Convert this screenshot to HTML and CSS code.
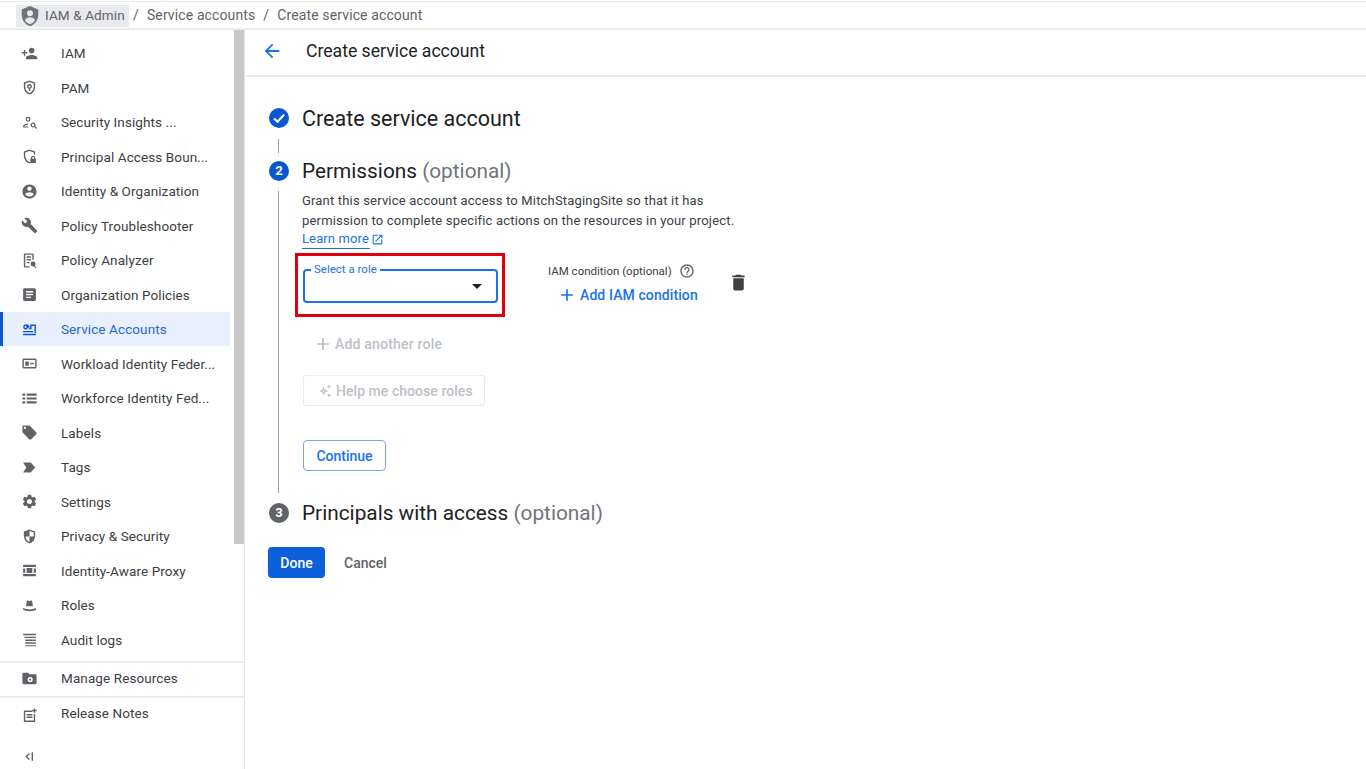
FILE: index.html
```html
<!DOCTYPE html>
<html lang="en">
<head>
    <meta charset="UTF-8">
    <meta name="viewport" content="width=device-width, initial-scale=1.0">
    <title>Create service account</title>
    <link rel="stylesheet" href="styles.css">
</head>
<body>
    <header class="crumbs">
        <span class="crumb-chip">
            <svg class="crumb-icon" viewBox="0 0 24 24"><path d="M12 1L3 5v6c0 5.55 3.84 10.74 9 12 5.16-1.26 9-6.45 9-12V5l-9-4z"/><circle cx="12" cy="9" r="3.2" fill="#e8eaed"/><path d="M6.5 17c.3-2.4 3.3-3.6 5.5-3.6s5.200 1.200 5.500 3.600c-1.300 1.900-3.300 3.400-5.500 4-2.200-.6-4.200-2.100-5.500-4z" fill="#e8eaed"/></svg>
            IAM &amp; Admin
        </span>
        <span class="crumb-sep">/</span>
        <span>Service accounts</span>
        <span class="crumb-sep">/</span>
        <span>Create service account</span>
    </header>

    <div class="shell">
        <nav class="sidebar">
            <div class="nav-scroll">
                <ul class="nav-list">
                    <li class="nav-item"><svg class="nav-icon" viewBox="0 0 24 24"><path d="M15 12c2.21 0 4-1.790 4-4s-1.790-4-4-4-4 1.790-4 4 1.790 4 4 4zm-9-2V7H4v3H1v2h3v3h2v-3h3v-2H6zm9 4c-2.670 0-8 1.340-8 4v2h16v-2c0-2.660-5.330-4-8-4z"/></svg>IAM</li>
                    <li class="nav-item"><svg class="nav-icon" viewBox="0 0 24 24"><path d="M12 2L4 5v6c0 5 3.400 9.700 8 11 4.600-1.300 8-6 8-11V5l-8-3zm6 9c0 4-2.500 7.600-6 8.900-3.500-1.300-6-4.900-6-8.900V6.400l6-2.200 6 2.200V11z"/><path d="M12 7a3.500 3.500 0 0 0-1 6.850V17h2v-3.150A3.500 3.500 0 0 0 12 7zm0 5a1.500 1.500 0 1 1 0-3 1.500 1.500 0 0 1 0 3z"/></svg>PAM</li>
                    <li class="nav-item"><svg class="nav-icon" viewBox="0 0 24 24"><path d="M10 4a3.500 3.500 0 1 0 0 7 3.500 3.500 0 0 0 0-7zm0 5.200a1.700 1.700 0 1 1 0-3.400 1.700 1.700 0 0 1 0 3.400zM3 19v-1.500c0-2.500 4-4 7-4v1.800c-2.600 0-5.200 1.200-5.200 2.200h5.700V19H3z"/><path d="M17 12a3.500 3.500 0 1 0 1.900 6.440L21.500 21l1.300-1.300-2.570-2.570A3.500 3.500 0 0 0 17 12zm0 5.200a1.700 1.700 0 1 1 0-3.400 1.700 1.700 0 0 1 0 3.400z"/></svg>Security Insights ...</li>
                    <li class="nav-item"><svg class="nav-icon" viewBox="0 0 24 24"><path d="M12 2L4 5v6c0 5 3.400 9.700 8 11l1-.3v-2.100l-1 .3c-3.500-1.300-6-4.900-6-8.900V6.400l6-2.200 6 2.200V9h2V5l-8-3z"/><path d="M17 11a3 3 0 0 0-3 3v1h-1v6h8v-6h-1v-1a3 3 0 0 0-3-3zm-1.300 4v-1a1.300 1.300 0 0 1 2.600 0v1h-2.600z"/></svg>Principal Access Boun...</li>
                    <li class="nav-item"><svg class="nav-icon" viewBox="0 0 24 24"><path d="M12 2C6.480 2 2 6.480 2 12s4.480 10 10 10 10-4.480 10-10S17.520 2 12 2zm0 3c1.660 0 3 1.340 3 3s-1.340 3-3 3-3-1.340-3-3 1.340-3 3-3zm0 14.200c-2.500 0-4.710-1.280-6-3.220.030-1.990 4-3.080 6-3.080 1.990 0 5.970 1.090 6 3.080-1.290 1.940-3.500 3.220-6 3.220z"/></svg>Identity &amp; Organization</li>
                    <li class="nav-item"><svg class="nav-icon" viewBox="0 0 24 24"><path d="M22.700 19l-9.100-9.100c.9-2.300.4-5-1.500-6.900-2-2-5-2.400-7.400-1.300L9 6 6 9 1.600 4.700C.4 7.100.9 10.100 2.900 12.100c1.900 1.900 4.600 2.400 6.900 1.500l9.100 9.100c.4.4 1 .4 1.400 0l2.300-2.300c.5-.4.5-1.100.1-1.400z"/></svg>Policy Troubleshooter</li>
                    <li class="nav-item"><svg class="nav-icon" viewBox="0 0 24 24"><path d="M6 2h10a2 2 0 0 1 2 2v7h-2V4H6v16h6v2H6a2 2 0 0 1-2-2V4a2 2 0 0 1 2-2zm2 4h6v2H8V6zm0 4h6v2H8v-2zm0 4h4v2H8v-2z"/><circle cx="17" cy="17" r="3.500"/><path d="M19 19l3 3-1 1-3-3z"/></svg>Policy Analyzer</li>
                    <li class="nav-item"><svg class="nav-icon" viewBox="0 0 24 24"><path d="M19 3H5c-1.100 0-2 .9-2 2v14c0 1.100.9 2 2 2h14c1.100 0 2-.9 2-2V5c0-1.100-.9-2-2-2zm-5 14H7v-2h7v2zm3-4H7v-2h10v2zm0-4H7V7h10v2z"/></svg>Organization Policies</li>
                    <li class="nav-item is-active"><svg class="nav-icon" viewBox="0 0 24 24"><path d="M6.500 5a3.500 3.500 0 1 0 3.300 4.700H13V5h8v12h-2V7h-4v4.700H9.800A3.500 3.500 0 0 0 6.500 5zm0 5a1.500 1.500 0 1 1 0-3 1.500 1.500 0 0 1 0 3zM3 14h14v2H3v-2zm0 4h18v2H3v-2z"/></svg>Service Accounts</li>
                    <li class="nav-item"><svg class="nav-icon" viewBox="0 0 24 24"><path d="M20 5H4a2 2 0 0 0-2 2v10a2 2 0 0 0 2 2h16a2 2 0 0 0 2-2V7a2 2 0 0 0-2-2zm0 12H4V7h16v10z"/><path d="M6 9h5v6H6zM13 11h5v2h-5z"/></svg>Workload Identity Feder...</li>
                    <li class="nav-item"><svg class="nav-icon" viewBox="0 0 24 24"><path d="M2 5h4v3H2zM8 5h14v3H8zM2 10.500h4v3H2zM8 10.500h14v3H8zM2 16h4v3H2zM8 16h14v3H8z"/></svg>Workforce Identity Fed...</li>
                    <li class="nav-item"><svg class="nav-icon" viewBox="0 0 24 24"><path d="M21.410 11.580l-9-9C12.050 2.220 11.550 2 11 2H4c-1.100 0-2 .9-2 2v7c0 .55.22 1.050.59 1.420l9 9c.36.36.86.58 1.410.58.55 0 1.050-.22 1.410-.59l7-7c.37-.36.59-.86.59-1.410 0-.55-.23-1.060-.59-1.420zM5.500 7C4.670 7 4 6.330 4 5.500S4.670 4 5.500 4 7 4.670 7 5.500 6.330 7 5.500 7z"/></svg>Labels</li>
                    <li class="nav-item"><svg class="nav-icon" viewBox="0 0 24 24"><path d="M3 5h10c.7 0 1.300.3 1.700.9L20 12l-5.300 6.100c-.4.6-1 .9-1.700.9H3l4.500-7L3 5z"/></svg>Tags</li>
                    <li class="nav-item"><svg class="nav-icon" viewBox="0 0 24 24"><path d="M19.140 12.940c.04-.3.06-.61.06-.94 0-.32-.02-.64-.07-.94l2.030-1.580c.18-.14.23-.41.12-.61l-1.920-3.320c-.12-.22-.37-.29-.59-.22l-2.390.96c-.5-.38-1.030-.7-1.620-.94l-.36-2.540c-.04-.24-.24-.41-.48-.41h-3.840c-.24 0-.43.17-.47.41l-.36 2.540c-.59.24-1.130.57-1.620.94l-2.390-.96c-.22-.08-.47 0-.59.22L2.740 8.870c-.12.21-.08.47.12.61l2.030 1.580c-.05.3-.09.63-.09.94s.02.64.07.94l-2.030 1.580c-.18.14-.23.41-.12.61l1.920 3.320c.12.22.37.29.59.22l2.390-.96c.5.38 1.030.7 1.620.94l.36 2.540c.05.24.24.41.48.41h3.840c.24 0 .44-.17.47-.41l.36-2.540c.59-.24 1.130-.56 1.620-.94l2.390.96c.22.08.47 0 .59-.22l1.920-3.320c.12-.22.07-.47-.12-.61l-2.010-1.580zM12 15.600c-1.980 0-3.600-1.620-3.600-3.600s1.620-3.600 3.600-3.600 3.600 1.620 3.600 3.600-1.620 3.600-3.600 3.600z"/></svg>Settings</li>
                    <li class="nav-item"><svg class="nav-icon" viewBox="0 0 24 24"><path d="M12 2L4 5v6c0 5 3.400 9.700 8 11 4.600-1.300 8-6 8-11V5l-8-3zm0 10V4.200l6 2.200V12h-6zm0 0v7.900c-2.900-1-5.200-4.200-5.800-7.900H12z"/></svg>Privacy &amp; Security</li>
                    <li class="nav-item"><svg class="nav-icon" viewBox="0 0 24 24"><path d="M3 4h18v3H3zM3 17h18v3H3zM3 9h3v6H3zM18 9h3v6h-3zM8 8.500h8v7H8z"/></svg>Identity-Aware Proxy</li>
                    <li class="nav-item"><svg class="nav-icon" viewBox="0 0 24 24"><path d="M8 7c0-1.100.7-2 1.600-2 .9 0 1.400.6 2.400.6s1.500-.6 2.400-.6c.9 0 1.600.9 1.600 2l.8 6H7.200L8 7zM3 15.500c2.400 1.300 5.600 2 9 2s6.600-.7 9-2V18c-1.500 1.300-5 2-9 2s-7.500-.7-9-2v-2.500z"/></svg>Roles</li>
                    <li class="nav-item"><svg class="nav-icon" viewBox="0 0 24 24"><path d="M3 4h18v2H3zM5 8h16v2H5zM6 12h15v2H6zM6 16h15v2H6zM6 20h15v1.500H6z"/></svg>Audit logs</li>
                </ul>
                <div class="scrollbar"></div>
            </div>
            <div class="nav-footer">
                <div class="nav-item nav-extra"><svg class="nav-icon" viewBox="0 0 24 24"><path d="M20 6h-8l-2-2H4a2 2 0 0 0-2 2v12a2 2 0 0 0 2 2h16a2 2 0 0 0 2-2V8a2 2 0 0 0-2-2z"/><circle cx="13" cy="13.500" r="3.600" fill="#fff"/><circle cx="13" cy="13.500" r="1.500"/></svg>Manage Resources</div>
                <div class="nav-item nav-extra"><svg class="nav-icon nav-icon-low" viewBox="0 0 24 24"><path d="M5 5h11v2H6v12h12V10h2v10a1 1 0 0 1-1 1H5a1 1 0 0 1-1-1V6a1 1 0 0 1 1-1zm3 5h8v2H8v-2zm0 3.500h8v2H8v-2zM18 2h2v2h2v2h-2v2h-2V6h-2V4h2V2z"/></svg>Release Notes</div>
                <div class="nav-collapse"><svg class="nav-icon" viewBox="0 0 24 24"><path d="M11 7l-5 5 5 5 1.400-1.400L8.800 12l3.600-3.600L11 7zM15 6h2v12h-2z"/></svg></div>
            </div>
        </nav>

        <main class="content">
            <div class="page-title">
                <svg class="back-icon" viewBox="0 0 24 24"><path d="M20 11H7.830l5.590-5.590L12 4l-8 8 8 8 1.410-1.410L7.830 13H20v-2z"/></svg>
                <h1>Create service account</h1>
            </div>

            <div class="stepper">
                <div class="step-head">
                    <svg class="step-badge" viewBox="0 0 20 20"><circle cx="10" cy="10" r="10" fill="#0b57d0"/><path d="M5 10.500l3.500 3.300L15 6.800" fill="none" stroke="#fff" stroke-width="2"/></svg>
                    <h2 class="step-done">Create service account</h2>
                </div>
                <div class="step-link"></div>

                <div class="step-head">
                    <span class="step-num">2</span>
                    <h2>Permissions <span class="muted">(optional)</span></h2>
                </div>
                <div class="step-body">
                    <p class="step-text">Grant this service account access to MitchStagingSite so that it has<br>permission to complete specific actions on the resources in your project.</p>
                    <a class="learn-more">Learn more<svg class="ext-icon" viewBox="0 0 24 24"><path d="M19 19H5V5h7V3H5c-1.110 0-2 .9-2 2v14c0 1.100.89 2 2 2h14c1.100 0 2-.9 2-2v-7h-2v7zM14 3v2h3.590l-9.830 9.830 1.410 1.410L19 6.410V10h2V3h-7z"/></svg></a>

                    <div class="role-row">
                        <div class="highlight">
                            <div class="role-select">
                                <span class="role-label">Select a role</span>
                                <span class="caret"></span>
                            </div>
                        </div>
                        <div class="condition">
                            <div class="condition-label">IAM condition (optional)
                                <svg class="help-icon" viewBox="0 0 24 24"><path d="M11 18h2v-2h-2v2zm1-16C6.480 2 2 6.480 2 12s4.480 10 10 10 10-4.480 10-10S17.520 2 12 2zm0 18c-4.410 0-8-3.590-8-8s3.590-8 8-8 8 3.590 8 8-3.590 8-8 8zm0-14c-2.210 0-4 1.790-4 4h2c0-1.100.9-2 2-2s2 .9 2 2c0 2-3 1.750-3 5h2c0-2.250 3-2.500 3-5 0-2.210-1.790-4-4-4z"/></svg>
                            </div>
                            <div class="condition-add">
                                <svg class="add-icon" viewBox="0 0 24 24"><path d="M19 13h-6v6h-2v-6H5v-2h6V5h2v6h6v2z"/></svg>
                                Add IAM condition
                            </div>
                        </div>
                        <svg class="trash-icon" viewBox="0 0 24 24"><path d="M6 19c0 1.100.9 2 2 2h8c1.100 0 2-.9 2-2V7H6v12zM19 4h-3.500l-1-1h-5l-1 1H5v2h14V4z"/></svg>
                    </div>

                    <div class="add-role">
                        <svg class="add-icon" viewBox="0 0 24 24"><path d="M19 13h-6v6h-2v-6H5v-2h6V5h2v6h6v2z"/></svg>
                        Add another role
                    </div>
                    <div class="help-roles">
                        <svg class="spark-icon" viewBox="0 0 24 24"><path d="M10 5l1.800 5.200L17 12l-5.200 1.800L10 19l-1.800-5.200L3 12l5.200-1.800L10 5zm0 5.200l-.6 1.200-1.200.6 1.200.6.600 1.200.6-1.200 1.200-.6-1.200-.6-.6-1.200zM18 2l1 2.500 2.500 1-2.500 1-1 2.500-1-2.500-2.500-1 2.500-1L18 2zM18 15l1 2.500 2.500 1-2.500 1-1 2.500-1-2.500-2.500-1 2.500-1 1-2.500z"/></svg>
                        Help me choose roles
                    </div>
                    <button class="btn-continue">Continue</button>
                </div>

                <div class="step-head step-last">
                    <span class="step-num step-num-off">3</span>
                    <h2>Principals with access <span class="muted">(optional)</span></h2>
                </div>
            </div>

            <div class="actions">
                <button class="btn-done">Done</button>
                <button class="btn-cancel">Cancel</button>
            </div>
        </main>
    </div>
</body>
</html>
```

FILE: styles.css
```css
* {
    box-sizing: border-box;
}
html, body {
    height: 100%;
}
body {
    margin: 0;
    height: 769px;
    overflow: hidden;
    background: #fff;
    color: #3c4043;
    font-family: Roboto, "Liberation Sans", sans-serif;
    font-size: 14px;
    display: flex;
    flex-direction: column;
}

/* breadcrumb bar */
.crumbs {
    height: 29px;
    margin-top: 1px;
    padding: 3px 0 0 16px;
    border-top: 1px solid #e8e8e8;
    border-bottom: 2px solid #ececec;
    display: flex;
    align-items: flex-start;
    gap: 8px;
    color: #5f6368;
    line-height: 21px;
    letter-spacing: 0.12px;
    flex: none;
    margin-bottom: -1px;
}
.crumb-chip {
    height: 22px;
    width: 113px;
    padding: 0 0 1px 3px;
    background: #e8eaed;
    display: flex;
    align-items: center;
    gap: 4px;
    margin-right: -4px;
    font-size: 13.5px;
}
.crumb-icon {
    width: 22px;
    height: 22px;
    fill: #70757a;
    flex: none;
}

.shell {
    flex: 1;
    display: flex;
    min-height: 0;
}

/* left nav */
.sidebar {
    width: 245px;
    border-right: 1px solid #e4e4e4;
    display: flex;
    flex-direction: column;
    flex: none;
}
.nav-scroll {
    height: 632px;
    display: flex;
    flex: none;
}
.nav-list {
    list-style: none;
    margin: 0;
    padding: 6.8px 0 0;
    width: 230px;
}
.scrollbar {
    width: 10px;
    height: 514px;
    margin: 1px 0 0 4px;
    background: #c8c8c8;
}
.nav-item {
    height: 34.53px;
    display: flex;
    align-items: center;
    padding-left: 21px;
    gap: 23px;
    white-space: nowrap;
    font-size: 13.5px;
    letter-spacing: 0.1px;
}
.nav-icon {
    width: 17px;
    height: 17px;
    fill: #5f6368;
    flex: none;
}
.is-active {
    background: #e8f0fe;
    color: #2a66d0;
    border-left: 3px solid #0b57d0;
    padding-left: 18px;
}
.is-active .nav-icon {
    fill: #0b57d0;
}
.nav-footer {
    flex: 1;
}
.nav-extra {
    height: 35px;
    border-top: 2px solid #ececec;
    padding-bottom: 3px;
}
.nav-extra:last-of-type {
    border-bottom: 2px solid #ececec;
    height: 37px;
}
.nav-icon-low {
    margin-top: 4px;
}
.nav-collapse {
    padding: 17px 0 0 21px;
}

/* main column */
.content {
    flex: 1;
    min-width: 0;
}
.page-title {
    height: 48px;
    padding: 0 0 3px 16px;
    border-bottom: 2px solid #ececec;
    display: flex;
    align-items: center;
    gap: 23px;
}
.back-icon {
    width: 22px;
    height: 22px;
    fill: #1a73e8;
}
h1 {
    margin: 0;
    font-size: 17.6px;
    font-weight: 400;
    color: #202124;
}
.stepper {
    padding: 28px 0 0 24px;
}
.step-head {
    display: flex;
    align-items: center;
    gap: 13px;
    height: 26px;
}
.step-head h2 {
    margin: 0;
    font-size: 20.8px;
    font-weight: 400;
    color: #202124;
}
.step-head .step-done {
    font-size: 21.5px;
}
.step-badge {
    width: 20px;
    height: 20px;
    flex: none;
}
.step-num {
    width: 20px;
    height: 20px;
    border-radius: 50%;
    background: #0b57d0;
    color: #fff;
    font-size: 13px;
    font-weight: 700;
    text-align: center;
    line-height: 20px;
    flex: none;
}
.step-num-off {
    background: #5f6368;
}
.muted {
    color: #70757a;
}
.step-link {
    width: 1px;
    height: 14px;
    margin: 8px 0 5px 9px;
    background: #9aa0a6;
}
.step-body {
    margin: 7px 0 0 9px;
    padding: 0 0 23px 23px;
    border-left: 1px solid #9aa0a6;
    height: 302px;
}
.step-text {
    margin: 0;
    font-size: 13px;
    line-height: 19.5px;
    letter-spacing: 0.18px;
}
.learn-more {
    display: inline-flex;
    align-items: center;
    gap: 2px;
    color: #1a73e8;
    font-size: 13px;
    line-height: 18px;
    border-bottom: 1px solid #1a73e8;
    letter-spacing: 0.12px;
}
.ext-icon {
    width: 13px;
    height: 13px;
    fill: #1a73e8;
    margin-right: -14px;
}
.role-row {
    display: flex;
    align-items: flex-start;
    margin: 4px 0 0 -7px;
}
.highlight {
    width: 210px;
    height: 64px;
    border: 3px solid #e0000e;
    padding: 13px 0 0 5px;
}
.role-select {
    width: 195px;
    height: 34px;
    border: 2px solid #1a73e8;
    border-radius: 4px;
    position: relative;
    display: flex;
    align-items: center;
    justify-content: flex-end;
    padding-right: 14px;
}
.role-label {
    position: absolute;
    left: 6px;
    top: -9px;
    padding: 0 3px;
    background: #fff;
    color: #1a73e8;
    font-size: 11.5px;
    line-height: 14px;
}
.caret {
    border-left: 5px solid transparent;
    border-right: 5px solid transparent;
    border-top: 5px solid #202124;
}
.condition {
    margin: 9px 0 0 43px;
    width: 172px;
}
.condition-label {
    display: flex;
    align-items: center;
    gap: 7px;
    font-size: 11.5px;
    height: 18px;
    white-space: nowrap;
}
.help-icon {
    width: 16px;
    height: 16px;
    fill: #5f6368;
}
.condition-add {
    display: flex;
    align-items: center;
    gap: 3px;
    margin: 5px 0 0 9px;
    color: #1a73e8;
    font-weight: 500;
    letter-spacing: 0.1px;
    white-space: nowrap;
}
.add-icon {
    width: 20px;
    height: 20px;
    fill: currentColor;
    flex: none;
}
.trash-icon {
    width: 21px;
    height: 21px;
    fill: #3c4043;
    margin: 19px 0 0 8px;
}
.add-role {
    display: flex;
    align-items: center;
    gap: 2px;
    margin: 18px 0 0 11px;
    color: #bdc1c6;
    font-weight: 500;
    letter-spacing: 0.2px;
    height: 18px;
}
.help-roles {
    width: 182px;
    height: 31px;
    margin: 22px 0 0 1px;
    border: 1px solid #e8eaed;
    border-radius: 3px;
    display: flex;
    align-items: center;
    gap: 3px;
    padding-left: 13px;
    color: #bdc1c6;
    font-weight: 500;
    letter-spacing: 0.05px;
}
.spark-icon {
    width: 16px;
    height: 16px;
    fill: #bdc1c6;
}
button {
    font-family: inherit;
    font-size: 14px;
    font-weight: 500;
    border-radius: 4px;
    cursor: pointer;
}
.btn-continue {
    display: block;
    width: 83px;
    height: 31px;
    margin: 34px 0 0 1px;
    padding: 0;
    background: #fff;
    border: 1px solid #7aa5e0;
    color: #1a73e8;
}
.step-last {
    margin-top: 7px;
}
.actions {
    display: flex;
    align-items: center;
    margin: 21px 0 0 23px;
}
.btn-done {
    width: 57px;
    height: 31px;
    border: none;
    background: #0b5fd8;
    color: #fff;
}
.btn-cancel {
    border: none;
    background: none;
    color: #5f6368;
    margin-left: 19px;
    padding: 0;
}
```
